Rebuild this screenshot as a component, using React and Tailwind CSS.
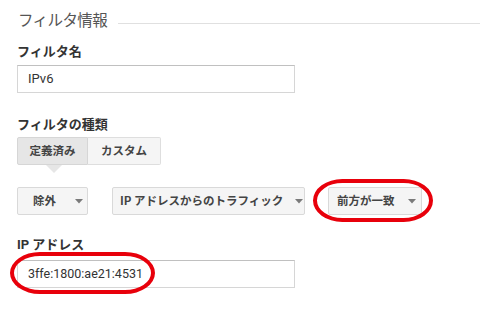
import React from "react";

const jp = { fontFamily: '"Noto Sans CJK JP", "Noto Sans", sans-serif' };
const rb = { fontFamily: 'Roboto, "Noto Sans CJK JP", sans-serif' };

function Caret() {
  return (
    <svg width="8" height="5" viewBox="0 0 8 5" className="shrink-0">
      <path d="M0 0 L8 0 L4 4.5 Z" fill="#7a7a7a" />
    </svg>
  );
}

function Dropdown({ label, className, gapClass }) {
  return (
    <div
      className={`h-[28px] flex items-center border border-[#d9d9d9] rounded-[2px] bg-[#f5f5f5] text-[11.5px] font-bold text-[#444] ${className}`}
    >
      <span className="whitespace-nowrap">{label}</span>
      <span className={gapClass}>
        <Caret />
      </span>
    </div>
  );
}

export default function App() {
  return (
    <div className="relative w-[480px] h-[309px] bg-white overflow-hidden" style={jp}>
      <div className="pl-[17px]">
        <div className="h-[38px] flex items-center">
          <span className="text-[15.5px] tracking-[-0.6px] text-[#555] leading-[20px] pl-[1px]">フィルタ情報</span>
          <div className="flex-1 h-px bg-[#e0e0e0] ml-[11px] mt-[9px]" />
        </div>
        <div className="mt-[3px] text-[13px] font-bold text-[#333] leading-[20px]">フィルタ名</div>
        <div className="mt-[4px] w-[278px] h-[28px] border border-[#d6d6d6] border-t-[#c0c0c0] flex items-center pl-[10px] text-[13px] text-[#333]" style={rb}>
          IPv6
        </div>
        <div className="mt-[21px] text-[13px] font-bold text-[#333] leading-[20px]">フィルタの種類</div>
        <div className="mt-[3px] flex">
          <div className="relative w-[71px] h-[28px] flex items-center justify-center bg-[#e6e6e6] border border-[#d6d6d6] rounded-l-[2px] text-[11.5px] font-bold text-[#444]">
            定義済み
            <div className="absolute left-[28px] top-[27px] w-0 h-0 border-l-[8px] border-r-[8px] border-t-[8px] border-l-transparent border-r-transparent border-t-[#e6e6e6]" />
          </div>
          <div className="w-[73px] h-[28px] flex items-center justify-center bg-[#f5f5f5] border border-l-0 border-[#dedede] rounded-r-[2px] text-[11.5px] font-bold text-[#444]">
            カスタム
          </div>
        </div>
        <div className="mt-[22px] flex">
          <Dropdown label="除外" className="w-[71px] pl-[15px]" gapClass="ml-[19px]" />
          <Dropdown label="IP アドレスからのトラフィック" className="ml-[24px] w-[193px] pl-[7px]" gapClass="ml-[12px]" />
          <Dropdown label="前方が一致" className="ml-[23px] w-[94px] pl-[8px]" gapClass="ml-[13px]" />
        </div>
        <div className="mt-[19px] text-[13px] font-bold text-[#333] leading-[20px]">
          <span style={rb}>IP</span> アドレス
        </div>
        <div className="mt-[5px] w-[278px] h-[28px] border border-[#d6d6d6] border-t-[#c0c0c0] flex items-center pl-[10px] text-[12.5px] text-[#333]" style={rb}>
          3ffe:1800:ae21:4531
        </div>
      </div>
      <div className="absolute left-[313px] top-[179px] w-[120px] h-[43px] border-[4px] border-[#e8000b] rounded-[30px/22px]" />
      <div className="absolute left-[10px] top-[252px] w-[145px] h-[42px] border-[4px] border-[#e8000b] rounded-[30px/21px]" />
    </div>
  );
}
